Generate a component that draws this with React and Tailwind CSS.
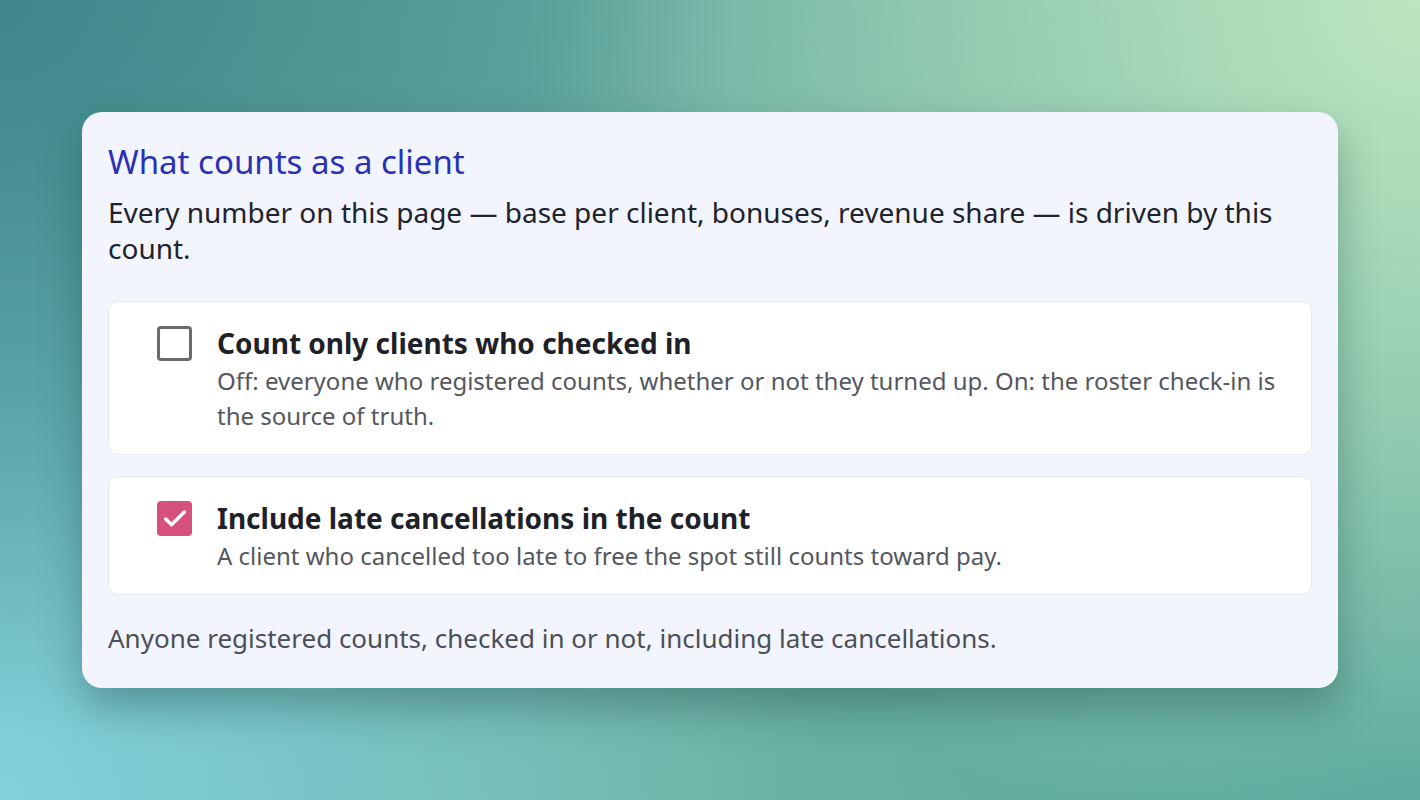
import { Check } from "lucide-react";

const Option = ({ checked, title, description }) => (
  <div className="flex items-start gap-[25px] rounded-[10px] border border-[#e6eaf3] bg-white pl-[48px] pr-6 pt-[21px] pb-[21px]">
    <div
      className={
        checked
          ? "mt-[3px] flex h-[35px] w-[35px] shrink-0 items-center justify-center rounded-[4px] bg-[#d5507a]"
          : "mt-[3px] h-[35px] w-[35px] shrink-0 rounded-[4px] border-[3px] border-[#6b6b6b] bg-white"
      }
    >
      {checked && <Check className="h-[28px] w-[28px] text-white" strokeWidth={3} />}
    </div>
    <div className="flex flex-col">
      <div className="text-[28px] font-bold leading-[40px] text-[#1e2128]">{title}</div>
      <div className="text-[24px] leading-[35px] text-[#54575d]">{description}</div>
    </div>
  </div>
);

export default function App() {
  return (
    <div
      className="flex min-h-screen items-center justify-center bg-[radial-gradient(circle_at_0%_0%,#3f8689_0%,transparent_45%),radial-gradient(circle_at_100%_0%,#bde6bf_0%,transparent_55%),radial-gradient(circle_at_0%_100%,#82d2dc_0%,transparent_50%),radial-gradient(circle_at_100%_100%,#50a39c_0%,transparent_55%),linear-gradient(135deg,#5aa39e,#7fbfa8)]"
      style={{ fontFamily: '"Noto Sans", "Open Sans", sans-serif' }}
    >
      <div className="w-[1256px] rounded-[20px] bg-[#f2f5fe] px-[26px] pt-[30px] pb-[34px] shadow-[0_20px_40px_rgba(20,60,60,0.35)]">
        <h2 className="text-[33px] leading-[40px] text-[#2a31b6]">What counts as a client</h2>
        <p className="mt-[12px] text-[28px] leading-[36px] text-[#1f232b]">
          Every number on this page — base per client, bonuses, revenue share — is driven by this count.
        </p>

        <div className="mt-[35px] flex flex-col gap-[21px]">
          <Option
            checked={false}
            title="Count only clients who checked in"
            description="Off: everyone who registered counts, whether or not they turned up. On: the roster check-in is the source of truth."
          />
          <Option
            checked
            title="Include late cancellations in the count"
            description="A client who cancelled too late to free the spot still counts toward pay."
          />
        </div>

        <p className="mt-[27px] text-[26px] leading-[32px] text-[#4c4f57]">
          Anyone registered counts, checked in or not, including late cancellations.
        </p>
      </div>
    </div>
  );
}
